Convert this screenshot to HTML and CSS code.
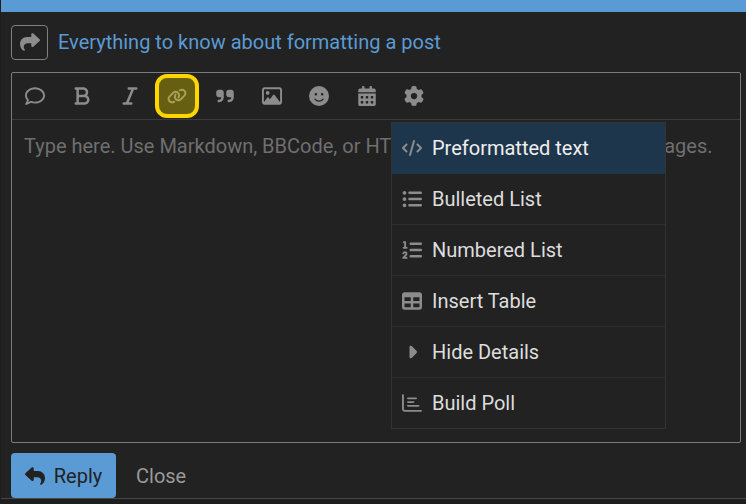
FILE: index.html
```html
<!DOCTYPE html>
<html lang="en">
<head>
<meta charset="utf-8">
<title>Composer</title>
<link rel="stylesheet" href="styles.css">
</head>
<body>
<div class="page">
  <div class="topbar"></div>
  <div class="hint">
    <span class="hint-btn"><svg class="hint-icon" viewBox="0 0 512 512"><path d="M307 34.800c-11.500 5.100-19 16.600-19 29.200v64H176C78.800 128 0 206.800 0 304C0 417.300 81.500 467.900 100.200 478.100c2.500 1.400 5.300 1.900 8.100 1.900c10.900 0 19.700-8.900 19.700-19.700c0-7.500-4.300-14.400-9.800-19.500C108.800 431.900 96 414.400 96 384c0-53 43-96 96-96h96v64c0 12.600 7.400 24.100 19 29.200s25 3 34.400-5.400l160-144c6.700-6.100 10.600-14.700 10.600-23.800s-3.800-17.700-10.600-23.800l-160-144c-9.400-8.500-22.900-10.600-34.400-5.400z"/></svg></span>
    <a class="hint-link">Everything to know about formatting a post</a>
  </div>
  <div class="editor">
    <div class="toolbar">
      <span class="tool"><svg class="ic" viewBox="0 0 512 512"><path d="M123.600 391.300c12.900-9.400 29.600-11.800 44.600-6.400c26.500 9.600 56.200 15.100 87.800 15.100c124.700 0 208-80.500 208-160s-83.300-160-208-160S48 160.500 48 240c0 32 12.400 62.800 35.700 89.200c8.600 9.700 12.800 22.500 11.800 35.500c-1.400 18.100-5.700 34.700-11.300 49.400c17-7.900 31.100-16.700 39.400-22.700zM21.200 431.900c1.800-2.700 3.500-5.400 5.100-8.100c10-16.600 19.500-38.400 21.400-62.900C17.700 326.800 0 285.100 0 240C0 125.100 114.600 32 256 32s256 93.100 256 208s-114.600 208-256 208c-37.100 0-72.300-6.400-104.100-17.900c-11.900 8.700-31.300 20.600-54.300 30.600c-15.100 6.600-32.300 12.600-50.100 16.100c-.8 .2-1.600 .3-2.400 .5c-4.400 .8-8.700 1.500-13.200 1.900c-.2 0-.5 .1-.7 .1c-5.100 .5-10.200 .8-15.300 .8c-6.500 0-12.300-3.900-14.800-9.900c-2.500-6-1.100-12.800 3.400-17.400c4.100-4.200 7.800-8.700 11.300-13.500c1.700-2.300 3.300-4.600 4.800-6.900c.1-.2 .2-.3 .3-.5z"/></svg></span>
      <span class="tool"><svg class="ic" viewBox="0 0 384 512"><path d="M0 64C0 46.300 14.300 32 32 32H80 96 224c70.700 0 128 57.300 128 128c0 31.300-11.300 60.100-30 82.300c37.100 22.400 62 63.100 62 109.700c0 70.700-57.300 128-128 128H96 80 32c-17.700 0-32-14.300-32-32s14.300-32 32-32H48V256 96H32C14.300 96 0 81.700 0 64zM224 224c35.300 0 64-28.700 64-64s-28.700-64-64-64H112V224H224zM112 288V416H256c35.300 0 64-28.700 64-64s-28.700-64-64-64H224 112z"/></svg></span>
      <span class="tool"><svg class="ic" viewBox="0 0 384 512"><path d="M128 64c0-17.700 14.300-32 32-32H352c17.700 0 32 14.300 32 32s-14.300 32-32 32H293.300L160 416h64c17.700 0 32 14.300 32 32s-14.300 32-32 32H32c-17.700 0-32-14.300-32-32s14.300-32 32-32H90.700L224 96H160c-17.700 0-32-14.300-32-32z"/></svg></span>
      <span class="tool tool-focus"><svg class="ic" viewBox="0 0 640 512"><path d="M579.800 267.700c56.500-56.500 56.500-148 0-204.500c-50-50-128.800-56.500-186.300-15.400l-1.600 1.100c-14.400 10.300-17.700 30.300-7.400 44.600s30.300 17.700 44.600 7.400l1.600-1.100c32.100-22.900 76-19.300 103.800 8.600c31.500 31.500 31.500 82.500 0 114L422.300 334.800c-31.500 31.500-82.500 31.500-114 0c-27.900-27.900-31.500-71.800-8.600-103.800l1.100-1.600c10.300-14.400 6.900-34.400-7.400-44.600s-34.400-6.900-44.600 7.400l-1.100 1.600C206.500 251.200 213 330 263 380c56.500 56.500 148 56.500 204.500 0L579.800 267.700zM60.200 244.300c-56.500 56.500-56.500 148 0 204.500c50 50 128.800 56.500 186.300 15.400l1.600-1.100c14.400-10.300 17.700-30.300 7.400-44.600s-30.300-17.700-44.600-7.400l-1.600 1.100c-32.100 22.900-76 19.300-103.800-8.600C74 372 74 321 105.500 289.500L217.700 177.200c31.500-31.500 82.500-31.500 114 0c27.900 27.900 31.500 71.800 8.600 103.900l-1.100 1.600c-10.300 14.400-6.900 34.400 7.400 44.600s34.400 6.900 44.600-7.400l1.100-1.600C433.500 260.800 427 182 377 132c-56.500-56.500-148-56.500-204.500 0L60.200 244.300z"/></svg></span>
      <span class="tool"><svg class="ic" viewBox="0 0 448 512"><path d="M448 296c0 66.300-53.700 120-120 120h-8c-17.700 0-32-14.300-32-32s14.300-32 32-32h8c30.900 0 56-25.100 56-56v-8H320c-35.300 0-64-28.700-64-64V160c0-35.300 28.700-64 64-64h64c35.300 0 64 28.700 64 64v32 32 72zm-256 0c0 66.300-53.700 120-120 120H64c-17.700 0-32-14.300-32-32s14.300-32 32-32h8c30.900 0 56-25.100 56-56v-8H64c-35.300 0-64-28.700-64-64V160c0-35.300 28.700-64 64-64h64c35.300 0 64 28.700 64 64v32 32 72z"/></svg></span>
      <span class="tool"><svg class="ic" viewBox="0 0 512 512"><path d="M448 80c8.800 0 16 7.200 16 16V415.800l-5-6.500-136-176c-4.500-5.900-11.600-9.300-19-9.300s-14.400 3.400-19 9.300L202 340.700l-30.500-42.700C167 291.700 159.800 288 152 288s-15 3.700-19.500 10.100l-80 112L48 416.300l0-.3V96c0-8.800 7.200-16 16-16H448zM64 32C28.700 32 0 60.700 0 96V416c0 35.300 28.700 64 64 64H448c35.300 0 64-28.700 64-64V96c0-35.300-28.700-64-64-64H64zm80 192a48 48 0 1 0 0-96 48 48 0 1 0 0 96z"/></svg></span>
      <span class="tool"><svg class="ic" viewBox="0 0 512 512"><path d="M256 512A256 256 0 1 0 256 0a256 256 0 1 0 0 512zM164.100 325.500C182 346.200 212.600 368 256 368s74-21.800 91.900-42.500c5.800-6.700 15.900-7.400 22.600-1.600s7.400 15.900 1.600 22.600C349.800 372.100 311.100 400 256 400s-93.800-27.900-116.100-53.500c-5.800-6.700-5.100-16.800 1.600-22.600s16.800-5.100 22.600 1.600zM144.400 208a32 32 0 1 1 64 0 32 32 0 1 1 -64 0zm192-32a32 32 0 1 1 0 64 32 32 0 1 1 0-64z"/></svg></span>
      <span class="tool"><svg class="ic" viewBox="0 0 448 512"><path d="M128 0c17.700 0 32 14.300 32 32V64H288V32c0-17.700 14.300-32 32-32s32 14.300 32 32V64h48c26.500 0 48 21.500 48 48v48H0V112C0 85.500 21.500 64 48 64H96V32c0-17.700 14.300-32 32-32zM0 192H448V464c0 26.500-21.500 48-48 48H48c-26.500 0-48-21.500-48-48V192zm64 80v32c0 8.800 7.200 16 16 16h32c8.800 0 16-7.200 16-16V272c0-8.800-7.200-16-16-16H80c-8.800 0-16 7.200-16 16zm128 0v32c0 8.800 7.200 16 16 16h32c8.800 0 16-7.200 16-16V272c0-8.800-7.200-16-16-16H208c-8.800 0-16 7.200-16 16zm144-16c-8.800 0-16 7.200-16 16v32c0 8.800 7.200 16 16 16h32c8.800 0 16-7.200 16-16V272c0-8.800-7.200-16-16-16H336zM64 400v32c0 8.800 7.200 16 16 16h32c8.800 0 16-7.200 16-16V400c0-8.800-7.200-16-16-16H80c-8.800 0-16 7.200-16 16zm144-16c-8.800 0-16 7.200-16 16v32c0 8.800 7.200 16 16 16h32c8.800 0 16-7.200 16-16V400c0-8.800-7.200-16-16-16H208zm112 16v32c0 8.800 7.200 16 16 16h32c8.800 0 16-7.200 16-16V400c0-8.800-7.200-16-16-16H336c-8.800 0-16 7.200-16 16z"/></svg></span>
      <span class="tool"><svg class="ic" viewBox="0 0 512 512"><path d="M495.900 166.600c3.200 8.700 .5 18.400-6.400 24.600l-43.300 39.400c1.100 8.300 1.700 16.800 1.700 25.400s-.6 17.100-1.700 25.400l43.300 39.400c6.900 6.200 9.600 15.900 6.400 24.600c-4.400 11.900-9.700 23.300-15.800 34.300l-4.700 8.100c-6.600 11-14 21.400-22.100 31.200c-5.900 7.200-15.700 9.600-24.500 6.800l-55.700-17.700c-13.400 10.300-28.200 18.900-44 25.400l-12.500 57.100c-2 9.100-9 16.300-18.200 17.800c-13.800 2.300-28 3.500-42.500 3.500s-28.700-1.200-42.500-3.500c-9.200-1.500-16.200-8.700-18.200-17.800l-12.500-57.100c-15.800-6.500-30.600-15.100-44-25.400L83.100 425.900c-8.800 2.800-18.600 .3-24.500-6.800c-8.100-9.800-15.500-20.200-22.100-31.200l-4.700-8.100c-6.100-11-11.400-22.400-15.800-34.300c-3.200-8.700-.5-18.400 6.400-24.600l43.300-39.400C64.600 273.100 64 264.600 64 256s.6-17.100 1.700-25.400L22.400 191.200c-6.900-6.200-9.600-15.900-6.400-24.600c4.400-11.900 9.700-23.300 15.800-34.300l4.700-8.100c6.600-11 14-21.400 22.100-31.200c5.900-7.200 15.700-9.600 24.500-6.800l55.700 17.700c13.400-10.300 28.200-18.900 44-25.400l12.500-57.100c2-9.100 9-16.300 18.200-17.800C227.300 1.200 241.500 0 256 0s28.700 1.200 42.500 3.500c9.200 1.500 16.200 8.700 18.200 17.800l12.500 57.100c15.800 6.500 30.600 15.100 44 25.400l55.700-17.700c8.800-2.800 18.600-.3 24.500 6.800c8.100 9.800 15.500 20.200 22.100 31.200l4.700 8.100c6.100 11 11.400 22.400 15.800 34.300zM256 336a80 80 0 1 0 0-160 80 80 0 1 0 0 160z"/></svg></span>
    </div>
    <div class="input">Type here. Use Markdown, BBCode, or HTML to format. Drag or paste images.</div>
    <ul class="menu">
      <li class="item item-active"><span class="item-ic"><svg class="mi" viewBox="0 0 640 512"><path d="M392.800 1.200c-17-4.900-34.700 5-39.600 22l-128 448c-4.900 17 5 34.700 22 39.600s34.700-5 39.600-22l128-448c4.900-17-5-34.700-22-39.600zm80.600 120.100c-12.500 12.500-12.500 32.800 0 45.300L562.700 256l-89.400 89.400c-12.500 12.500-12.500 32.800 0 45.300s32.800 12.500 45.300 0l112-112c12.500-12.500 12.500-32.800 0-45.300l-112-112c-12.500-12.500-32.800-12.500-45.300 0zm-306.700 0c-12.500-12.500-32.800-12.500-45.300 0l-112 112c-12.500 12.500-12.500 32.800 0 45.300l112 112c12.500 12.500 32.800 12.500 45.300 0s12.500-32.800 0-45.300L77.300 256l89.400-89.400c12.500-12.500 12.500-32.800 0-45.300z"/></svg></span>Preformatted text</li>
      <li class="item"><span class="item-ic"><svg class="mi" viewBox="0 0 512 512"><path d="M64 144a48 48 0 1 0 0-96 48 48 0 1 0 0 96zM192 64c-17.700 0-32 14.300-32 32s14.300 32 32 32H480c17.700 0 32-14.300 32-32s-14.300-32-32-32H192zm0 160c-17.700 0-32 14.300-32 32s14.300 32 32 32H480c17.700 0 32-14.300 32-32s-14.300-32-32-32H192zm0 160c-17.700 0-32 14.300-32 32s14.300 32 32 32H480c17.700 0 32-14.300 32-32s-14.300-32-32-32H192zM64 464a48 48 0 1 0 0-96 48 48 0 1 0 0 96zm48-208a48 48 0 1 0 -96 0 48 48 0 1 0 96 0z"/></svg></span>Bulleted List</li>
      <li class="item"><span class="item-ic"><svg class="mi" viewBox="0 0 512 512"><path d="M24 56c0-13.300 10.700-24 24-24H80c13.300 0 24 10.700 24 24V176h16c13.300 0 24 10.700 24 24s-10.700 24-24 24H40c-13.300 0-24-10.700-24-24s10.700-24 24-24H56V80H48C34.700 80 24 69.300 24 56zM86.700 341.200c-6.500-7.400-18.300-6.900-24 1.200L51.500 357.900c-7.700 10.800-22.700 13.300-33.500 5.600s-13.300-22.700-5.600-33.500l11.100-15.600c23.700-33.200 72.300-35.600 99.200-4.900c21.300 24.400 20.800 60.900-1.100 84.700L86.800 432H120c13.300 0 24 10.700 24 24s-10.700 24-24 24H32c-9.500 0-18.200-5.600-22-14.400s-2.100-18.900 4.300-25.900l72-78c5.300-5.800 5.400-14.600 .3-20.500zM224 64H480c17.700 0 32 14.300 32 32s-14.300 32-32 32H224c-17.700 0-32-14.300-32-32s14.300-32 32-32zm0 160H480c17.700 0 32 14.300 32 32s-14.300 32-32 32H224c-17.700 0-32-14.300-32-32s14.300-32 32-32zm0 160H480c17.700 0 32 14.300 32 32s-14.300 32-32 32H224c-17.700 0-32-14.300-32-32s14.300-32 32-32z"/></svg></span>Numbered List</li>
      <li class="item"><span class="item-ic"><svg class="mi" viewBox="0 0 512 512"><path d="M64 256V160H224v96H64zm0 64H224v96H64V320zm224 96V320H448v96H288zM448 256H288V160H448v96zM64 32C28.700 32 0 60.700 0 96V416c0 35.300 28.700 64 64 64H448c35.300 0 64-28.700 64-64V96c0-35.300-28.700-64-64-64H64z"/></svg></span>Insert Table</li>
      <li class="item"><span class="item-ic"><svg class="mi" viewBox="0 0 256 512"><path d="M246.600 278.600c12.500-12.500 12.500-32.800 0-45.300l-128-128c-9.200-9.200-22.900-11.900-34.900-6.900s-19.800 16.600-19.800 29.600l0 256c0 12.900 7.800 24.600 19.800 29.600s25.700 2.300 34.900-6.900l128-128z"/></svg></span>Hide Details</li>
      <li class="item"><span class="item-ic"><svg class="mi" viewBox="0 0 512 512"><path d="M24 32c13.300 0 24 10.700 24 24V408c0 13.300 10.700 24 24 24H488c13.300 0 24 10.700 24 24s-10.700 24-24 24H72C32.200 480 0 447.800 0 408V56C0 42.700 10.700 32 24 32zM128 136c0-13.300 10.700-24 24-24l208 0c13.300 0 24 10.700 24 24s-10.700 24-24 24l-208 0c-13.300 0-24-10.700-24-24zm24 72H296c13.300 0 24 10.700 24 24s-10.700 24-24 24H152c-13.300 0-24-10.700-24-24s10.700-24 24-24zm0 96H424c13.300 0 24 10.700 24 24s-10.700 24-24 24H152c-13.300 0-24-10.700-24-24s10.700-24 24-24z"/></svg></span>Build Poll</li>
    </ul>
  </div>
  <div class="actions">
    <button class="reply"><svg class="reply-ic" viewBox="0 0 512 512"><path d="M205 34.800c11.500 5.100 19 16.600 19 29.200v64H336c97.200 0 176 78.800 176 176c0 113.300-81.500 163.900-100.200 174.100c-2.500 1.400-5.300 1.900-8.100 1.900c-10.900 0-19.700-8.900-19.700-19.700c0-7.500 4.300-14.400 9.800-19.500c9.400-8.800 22.200-26.400 22.200-56.800c0-53-43-96-96-96H224v64c0 12.600-7.400 24.100-19 29.200s-25 3-34.400-5.400l-160-144C3.900 225.700 0 217.100 0 208s3.800-17.700 10.600-23.800l160-144c9.400-8.500 22.900-10.600 34.400-5.400z"/></svg>Reply</button>
    <span class="close">Close</span>
  </div>
  <div class="footer"></div>
</div>
</body>
</html>
```
FILE: styles.css
```css
* { box-sizing: border-box; }
html, body { margin: 0; padding: 0; }
body {
  background: #222;
  font-family: Roboto, "Liberation Sans", sans-serif;
  font-size: 20px;
  overflow: hidden;
}
.page {
  width: 746px;
  height: 504px;
  display: flex;
  flex-direction: column;
  border-left: 1px solid #1e1e1e;
}
.topbar { height: 12px; background: #5b9bd5; flex: none; }
.hint {
  display: flex;
  align-items: center;
  gap: 10px;
  margin: 12px 0 0 10px;
  height: 36px;
}
.hint-btn {
  width: 37px;
  height: 35px;
  border: 1px solid #7f7f7f;
  border-radius: 4px;
  display: flex;
  align-items: center;
  justify-content: center;
}
.hint-icon { width: 20px; height: 20px; fill: #8c8c8c; }
.hint-link { color: #5b9bd5; line-height: 24px; }
.editor {
  position: relative;
  margin: 12px 5px 0 10px;
  height: 371px;
  border: 1px solid #7a7a7a;
  border-radius: 2px;
  display: flex;
  flex-direction: column;
}
.toolbar {
  height: 47px;
  flex: none;
  display: flex;
  align-items: center;
  gap: 3.4px;
  padding-left: 1px;
  border-bottom: 1px solid #3a3a3a;
}
.tool {
  width: 44px;
  height: 44px;
  display: flex;
  align-items: center;
  justify-content: center;
  border-radius: 12px;
  border: 4px solid transparent;
}
.tool-focus { background: #665f12; border-color: #ffd500; }
.tool-focus .ic { fill: #a8a155; }
.ic { width: 20px; height: 20px; fill: #8c8c8c; }
.input {
  padding: 14px 12px;
  color: #6f6f6f;
  line-height: 24px;
  white-space: nowrap;
}
.menu {
  position: absolute;
  top: 49px;
  left: 379px;
  width: 275px;
  margin: 0;
  padding: 0;
  list-style: none;
  background: #222;
  border: 1px solid #333;
}
.item {
  height: 51px;
  display: flex;
  align-items: center;
  color: #ddd;
  border-bottom: 1px solid #2e2e2e;
  padding-left: 10px;
}
.item:last-child { border-bottom: 0; height: 50px; }
.item-active { background: #1e364c; color: #eee; border-bottom: 0; padding-bottom: 1px; }
.item-ic {
  width: 20px;
  height: 20px;
  margin-right: 10px;
  display: flex;
  align-items: center;
  justify-content: center;
}
.mi { width: 20px; height: 20px; fill: #8c8c8c; }
.actions {
  display: flex;
  align-items: center;
  margin: 10px 0 0 10px;
  gap: 20px;
  flex: none;
}
.reply {
  width: 105px;
  height: 45px;
  border: 0;
  border-radius: 4px;
  background: #5b9bd5;
  color: #222;
  font: inherit;
  display: flex;
  align-items: center;
  justify-content: center;
  gap: 9px;
  padding: 0;
}
.reply-ic { width: 20px; height: 20px; fill: #222; }
.close { color: #999; }
.footer {
  flex: 1;
  background: #1e1e1e;
  border-top: 1px solid #484848;
}
```
